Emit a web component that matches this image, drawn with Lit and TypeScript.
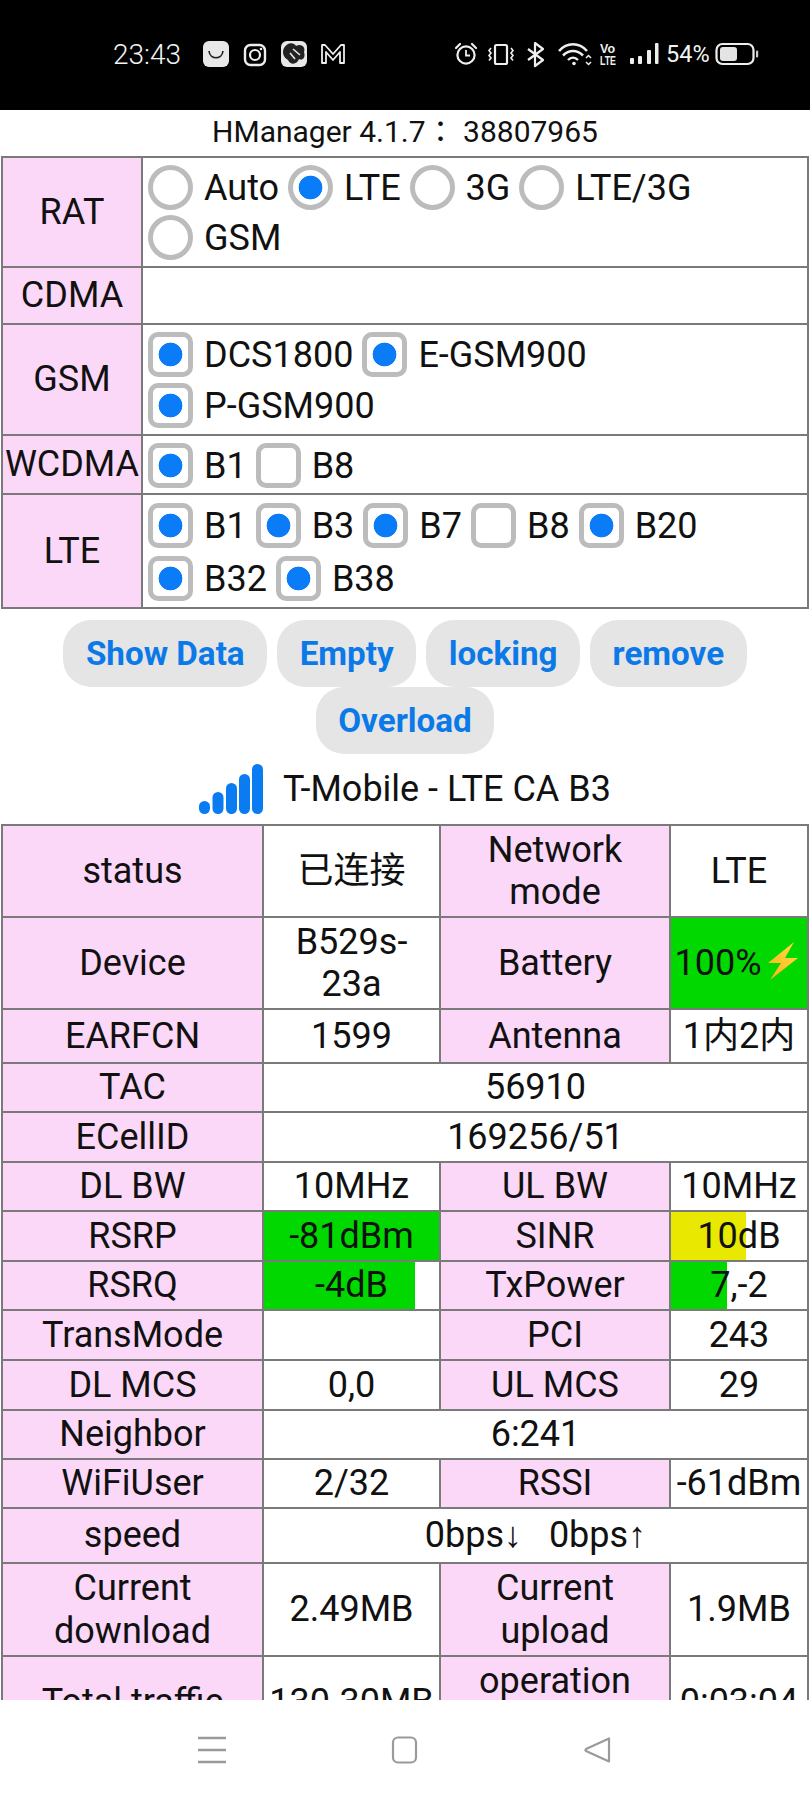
import { LitElement, html, css } from 'lit';
import { customElement } from 'lit/decorators.js';

type Opt = { label: string; on?: boolean };
type Cell = { text?: string; head?: boolean; span?: number; fill?: number; color?: string; bolt?: boolean };

const GREEN = '#00d800';
const YELLOW = '#e8e800';

// option rows are fixed: the wrap points come from the reference
const RAT: Opt[][] = [
  [{ label: 'Auto' }, { label: 'LTE', on: true }, { label: '3G' }, { label: 'LTE/3G' }],
  [{ label: 'GSM' }],
];
const GSM: Opt[][] = [
  [{ label: 'DCS1800', on: true }, { label: 'E-GSM900', on: true }],
  [{ label: 'P-GSM900', on: true }],
];
const WCDMA: Opt[][] = [[{ label: 'B1', on: true }, { label: 'B8' }]];
const LTE: Opt[][] = [
  [
    { label: 'B1', on: true },
    { label: 'B3', on: true },
    { label: 'B7', on: true },
    { label: 'B8' },
    { label: 'B20', on: true },
  ],
  [{ label: 'B32', on: true }, { label: 'B38', on: true }],
];

const head = (text: string): Cell => ({ text, head: true });
const val = (text: string): Cell => ({ text });
const wide = (text: string): Cell => ({ text, span: 3 });

const ROWS: { h: number; cells: Cell[] }[] = [
  { h: 92, cells: [head('status'), val('已连接'), head('Network mode'), val('LTE')] },
  {
    h: 92,
    cells: [
      head('Device'),
      val('B529s-23a'),
      head('Battery'),
      { text: '100%', fill: 100, color: GREEN, bolt: true },
    ],
  },
  { h: 54, cells: [head('EARFCN'), val('1599'), head('Antenna'), val('1内2内')] },
  { h: 49, cells: [head('TAC'), wide('56910')] },
  { h: 50, cells: [head('ECellID'), wide('169256/51')] },
  { h: 49, cells: [head('DL BW'), val('10MHz'), head('UL BW'), val('10MHz')] },
  {
    h: 50,
    cells: [
      head('RSRP'),
      { text: '-81dBm', fill: 100, color: GREEN },
      head('SINR'),
      { text: '10dB', fill: 55, color: YELLOW },
    ],
  },
  {
    h: 49,
    cells: [
      head('RSRQ'),
      { text: '-4dB', fill: 86.5, color: GREEN },
      head('TxPower'),
      { text: '7,-2', fill: 41, color: GREEN },
    ],
  },
  { h: 50, cells: [head('TransMode'), val(''), head('PCI'), val('243')] },
  { h: 50, cells: [head('DL MCS'), val('0,0'), head('UL MCS'), val('29')] },
  { h: 49, cells: [head('Neighbor'), wide('6:241')] },
  { h: 49, cells: [head('WiFiUser'), val('2/32'), head('RSSI'), val('-61dBm')] },
  { h: 55, cells: [head('speed'), wide('0bps↓\u00a0\u00a0\u00a00bps↑')] },
  { h: 93, cells: [head('Current download'), val('2.49MB'), head('Current upload'), val('1.9MB')] },
  { h: 93, cells: [head('Total traffic'), val('130.30MB'), head('operation time'), val('0:03:04')] },
];

@customElement('app-root')
export class AppRoot extends LitElement {
  private _options(name: string, type: string, rows: Opt[][], rowGap: string) {
    return html`
      <div class="opts ${rowGap}">
        ${rows.map(
          (row) => html`
            <div class="opt-row">
              ${row.map(
                (o) => html`
                  <label class="opt">
                    <input type=${type} name=${name} ?checked=${o.on} />
                    <span>${o.label}</span>
                  </label>
                `
              )}
            </div>
          `
        )}
      </div>
    `;
  }

  private _cell(c: Cell) {
    const style = c.fill
      ? `background: linear-gradient(90deg, ${c.color} ${c.fill}%, #fff ${c.fill}%)`
      : '';
    const cls = c.head ? 'head' : c.bolt ? 'tight' : '';
    return html`
      <td class=${cls} colspan=${c.span ?? 1} style=${style}>
        ${c.text}${c.bolt ? this._bolt() : ''}
      </td>
    `;
  }

  private _bolt() {
    return html`
      <svg class="bolt" width="30" height="38" viewBox="0 0 30 38">
        <defs>
          <linearGradient id="boltFill" x1="1" y1="0" x2="0" y2="1">
            <stop offset="0" stop-color="#ffdf45" />
            <stop offset="1" stop-color="#ffae1a" />
          </linearGradient>
        </defs>
        <path d="M26 0 L0 21 L13 21 L2 38 L30 16 L17 16 Z" fill="url(#boltFill)" />
      </svg>
    `;
  }

  private _statusLeft() {
    return html`
      <svg class="st-left" width="142" height="28" viewBox="0 0 142 28">
        <rect x="0" y="1" width="26" height="26" rx="6" fill="#e8e8e8" />
        <path d="M6 11 C7 20 19 20 20 11" fill="none" stroke="#222" stroke-width="1.700" />
        <rect x="42" y="5" width="20" height="20" rx="5.500" fill="none" stroke="#eee" stroke-width="2.400" />
        <circle cx="52" cy="15" r="5" fill="none" stroke="#eee" stroke-width="2.200" />
        <circle cx="58" cy="9" r="1.300" fill="#eee" />
        <rect x="78" y="1" width="26" height="26" rx="6" fill="#e8e8e8" />
        <path
          d="M81 8 C84 2 91 2 93 6 C98 3 103 7 101 12 C103 18 99 21 96 19 C94 25 87 25 85 20 C80 17 79 12 81 8 Z"
          fill="#222"
        />
        <path d="M90 9 L97 15 M87 13 L92 19" stroke="#e8e8e8" stroke-width="1.600" fill="none" />
        <path
          d="M119 23 V5 H122 L130 14 L138 5 H141 V23 H137 V12 L130 20 L123 12 V23 Z"
          fill="none"
          stroke="#eee"
          stroke-width="1.800"
          stroke-linejoin="round"
        />
      </svg>
    `;
  }

  private _statusRight() {
    return html`
      <svg class="st-right" width="205" height="28" viewBox="0 0 205 28">
        <g fill="none" stroke="#eee" stroke-width="2.200">
          <circle cx="11" cy="15" r="8.600" />
          <path d="M11 10 V15.500 H15" stroke-width="1.800" />
          <path d="M1 8 L5 4 M21 8 L17 4" stroke-linecap="round" />
          <rect x="40" y="5" width="12" height="19" rx="1.500" />
          <path d="M36 8 L34 10.500 L36 13 L34 15.500 L36 18 L34 20.500" stroke-width="1.600" />
          <path d="M56 8 L58 10.500 L56 13 L58 15.500 L56 18 L58 20.500" stroke-width="1.600" />
          <path d="M73 9 L88 20 L80 26 V3 L88 9 L73 20" stroke-width="2.200" stroke-linejoin="round" />
          <path d="M104 11 C112 2 124 2 132 11" stroke-width="2.600" />
          <path d="M108 15.500 C114 9.500 122 9.500 128 15.500" stroke-width="2.600" />
          <path d="M113 20 C116 17 120 17 123 20" stroke-width="2.400" />
          <path d="M131 18 L133.500 15.500 L136 18 M131 22 L133.500 24.500 L136 22" stroke-width="1.500" />
        </g>
        <circle cx="119" cy="23.500" r="1.800" fill="#eee" />
        <text class="volte" x="145" y="13" textLength="15" lengthAdjust="spacingAndGlyphs">Vo</text>
        <text class="volte" x="145" y="25" textLength="16" lengthAdjust="spacingAndGlyphs">LTE</text>
        <g fill="#eee">
          <rect x="175" y="18" width="4" height="6" rx="1" />
          <rect x="183" y="16" width="4" height="8" rx="1" />
          <rect x="192" y="10" width="4" height="14" rx="1" />
          <rect x="200" y="3" width="3.500" height="21" rx="1" />
        </g>
      </svg>
    `;
  }

  render() {
    return html`
      <header class="status">
        <span class="time">23:43</span>
        ${this._statusLeft()} ${this._statusRight()}
        <span class="pct">54%</span>
        <svg class="batt" width="44" height="24" viewBox="0 0 44 24">
          <rect x="1.500" y="2" width="37" height="20" rx="6" fill="none" stroke="#eee" stroke-width="2.200" />
          <rect x="5" y="5" width="17" height="14" rx="3" fill="#e4e4e4" />
          <rect x="41" y="8.500" width="2.200" height="7" rx="1" fill="#ccc" />
        </svg>
      </header>

      <main class="page">
        <div class="title">HManager 4.1.7： 38807965</div>

        <table class="bands">
          <colgroup>
            <col class="b1" />
            <col />
          </colgroup>
          <tr class="r-rat">
            <td class="head">RAT</td>
            <td class="left">${this._options('rat', 'radio', RAT, 'g50')}</td>
          </tr>
          <tr class="r-cdma">
            <td class="head">CDMA</td>
            <td></td>
          </tr>
          <tr class="r-gsm">
            <td class="head">GSM</td>
            <td class="left">${this._options('gsm', 'checkbox', GSM, 'g51')}</td>
          </tr>
          <tr class="r-wcdma">
            <td class="head tight">WCDMA</td>
            <td class="left">${this._options('wcdma', 'checkbox', WCDMA, 'g51')}</td>
          </tr>
          <tr class="r-lte">
            <td class="head">LTE</td>
            <td class="left">${this._options('lte', 'checkbox', LTE, 'g53')}</td>
          </tr>
        </table>

        <div class="buttons">
          <button>Show Data</button>
          <button>Empty</button>
          <button>locking</button>
          <button>remove</button>
          <button>Overload</button>
        </div>

        <div class="carrier">
          <svg width="64" height="50" viewBox="0 0 64 50">
            <g fill="#0b7bf2">
              <rect x="0" y="37" width="11" height="13" rx="5.500" />
              <rect x="13.500" y="28" width="11" height="22" rx="5.500" />
              <rect x="27" y="19" width="11" height="31" rx="5.500" />
              <rect x="40" y="10" width="11" height="40" rx="5.500" />
              <rect x="53" y="0" width="11" height="50" rx="5.500" />
            </g>
          </svg>
          <span>T-Mobile - LTE CA B3</span>
        </div>

        <table class="info">
          <colgroup>
            <col class="c1" />
            <col class="c2" />
            <col class="c3" />
            <col class="c4" />
          </colgroup>
          ${ROWS.map(
            (r) => html`<tr style="height: ${r.h}px">${r.cells.map((c) => this._cell(c))}</tr>`
          )}
        </table>
      </main>

      <footer class="nav">
        <svg width="28" height="28" viewBox="0 0 28 28">
          <path d="M0 2 H28 M0 14 H28 M0 26 H28" stroke="#9a9a9a" stroke-width="2.400" />
        </svg>
        <svg width="28" height="28" viewBox="0 0 28 28">
          <rect x="2" y="1.500" width="23" height="25" rx="5" fill="none" stroke="#9a9a9a" stroke-width="2.200" />
        </svg>
        <svg width="28" height="28" viewBox="0 0 28 28">
          <path
            d="M25 2.500 V25.500 L2 15 Q0.800 14 2 13 Z"
            fill="none"
            stroke="#9a9a9a"
            stroke-width="2.200"
            stroke-linejoin="round"
          />
        </svg>
      </footer>
    `;
  }

  static styles = css`
    :host {
      display: block;
      width: 810px;
      height: 1800px;
      overflow: hidden;
      background: #fff;
      color: #111;
      font-family: Roboto, 'Liberation Sans', 'Noto Sans CJK SC', sans-serif;
    }

    .status {
      display: flex;
      align-items: center;
      height: 110px;
      box-sizing: border-box;
      padding: 0 0 2px 113px;
      background: #000;
      color: #f4f4f4;
    }
    .time {
      width: 90px;
      font-size: 28px;
      font-weight: 300;
    }
    .st-right {
      margin-left: 110px;
    }
    .pct {
      width: 49px;
      margin-left: 6px;
      font-size: 23.500px;
      font-weight: 400;
    }
    .volte {
      font-size: 13px;
      font-weight: 700;
      fill: #eee;
      font-family: 'Liberation Sans', sans-serif;
    }

    .page {
      height: 1590px;
      overflow: hidden;
    }
    .title {
      height: 46px;
      line-height: 44px;
      text-align: center;
      font-size: 30px;
      font-family: Roboto, 'Noto Sans CJK TC', sans-serif;
    }

    table {
      margin-left: 1px;
      width: 808px;
      table-layout: fixed;
      border-collapse: collapse;
      font-size: 36px;
      line-height: 42.500px;
    }
    td {
      border: 2px solid #7a7a7a;
      padding: 0 4px;
      text-align: center;
      vertical-align: middle;
      white-space: normal;
    }
    td.head {
      background: #fbd8f8;
    }
    td.tight {
      padding: 0;
      white-space: nowrap;
    }
    td.left {
      padding: 1px 0 0;
      text-align: left;
    }
    col.b1 {
      width: 140px;
    }
    col.c1 {
      width: 261px;
    }
    col.c2 {
      width: 177px;
    }
    col.c3 {
      width: 230px;
    }
    col.c4 {
      width: 138px;
    }
    .r-rat {
      height: 110px;
    }
    .r-cdma {
      height: 57px;
    }
    .r-gsm {
      height: 111px;
    }
    .r-wcdma {
      height: 59px;
    }
    .r-lte {
      height: 114px;
    }

    .opts {
      display: flex;
      flex-direction: column;
      padding-left: 5px;
    }
    .g50 {
      row-gap: 5px;
    }
    .g51 {
      row-gap: 6px;
    }
    .g53 {
      row-gap: 8px;
    }
    .opt-row {
      display: flex;
      height: 45px;
      gap: 9px;
    }
    .opt {
      display: flex;
      align-items: center;
      gap: 11px;
    }
    .opt span {
      padding-top: 2px;
    }
    input {
      appearance: none;
      box-sizing: border-box;
      width: 45px;
      height: 45px;
      margin: 0;
      border: 5px solid #bcbcbc;
      background: #fff;
    }
    input[type='radio'] {
      border-radius: 50%;
    }
    input[type='checkbox'] {
      border-radius: 10px;
    }
    input:checked {
      background: radial-gradient(circle, #0a7cf7 11.500px, #fff 12.200px);
    }

    .buttons {
      display: flex;
      flex-wrap: wrap;
      justify-content: center;
      column-gap: 10px;
      padding-top: 11px;
    }
    button {
      height: 67px;
      padding: 0 22.500px;
      border: none;
      border-radius: 28px;
      background: #e5e5e5;
      color: #0b7ae8;
      font-family: inherit;
      font-size: 33.200px;
      font-weight: 700;
    }

    .carrier {
      display: flex;
      align-items: center;
      justify-content: center;
      gap: 20px;
      height: 70px;
      box-sizing: border-box;
      font-size: 36px;
    }

    .bolt {
      vertical-align: -5px;
      margin: 0 6px 0 -3px;
    }

    .nav {
      display: flex;
      align-items: center;
      gap: 165px;
      height: 100px;
      padding-left: 198px;
      background: #fff;
    }
  `;
}
